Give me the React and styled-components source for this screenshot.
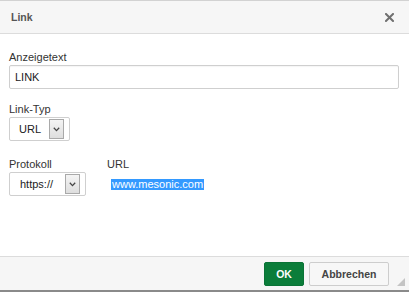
import React from "react";
import styled, { createGlobalStyle } from "styled-components";

const Global = createGlobalStyle`
  html, body { margin: 0; padding: 0; background: #fff; }
  body { font-family: "Liberation Sans", Arial, sans-serif; font-size: 11px; color: #333; }
  * { box-sizing: border-box; }
`;

const Dialog = styled.div`
  width: 409px;
  height: 292px;
  display: flex;
  flex-direction: column;
  border-top: 1px solid #d2d2d2;
  background: #fff;
`;

const Header = styled.div`
  height: 33px;
  flex: none;
  display: flex;
  align-items: center;
  justify-content: space-between;
  padding: 0 15px 0 11px;
  background: #f6f6f6;
  border-bottom: 1px solid #dcdcdc;
`;

const Title = styled.div`
  font-weight: bold;
  font-size: 10.5px;
  color: #555;
`;

const CloseIcon = styled.svg`
  display: block;
`;

const Body = styled.div`
  flex: 1;
  padding: 16px 10px 0 9px;
  display: flex;
  flex-direction: column;
`;

const Field = styled.div`
  display: flex;
  flex-direction: column;
  margin-top: ${(p) => p.$mt || 0}px;
`;

const Label = styled.div`
  height: 14px;
  line-height: 14px;
  margin-bottom: 1px;
  color: #333;
`;

const TextInput = styled.div`
  height: 24px;
  border: 1px solid #cfcfcf;
  border-radius: 2px;
  padding: 0 5px;
  display: flex;
  align-items: center;
  color: #222;
  box-shadow: inset 0 1px 1px rgba(0,0,0,0.04);
`;

const Select = styled.div`
  width: ${(p) => p.$w}px;
  height: 24px;
  border: 1px solid #cfcfcf;
  border-radius: 2px;
  display: flex;
  align-items: center;
  justify-content: space-between;
  padding: 0 5px 0 ${(p) => p.$pl}px;
  color: #222;
`;

const Arrow = styled.div`
  width: 15px;
  height: 20px;
  border: 1px solid #a9a9a9;
  background: linear-gradient(#f4f4f4, #dedede);
  display: flex;
  align-items: center;
  justify-content: center;
`;

const Row = styled.div`
  display: flex;
  margin-top: 16px;
`;

const Col = styled.div`
  display: flex;
  flex-direction: column;
  width: ${(p) => p.$w}px;
`;

const UrlValue = styled.div`
  height: 24px;
  display: flex;
  align-items: center;
  padding-left: 4px;
`;

const Selected = styled.span`
  background: #3399ff;
  color: #fff;
  line-height: 11px;
  padding: 0 1px;
`;

const Footer = styled.div`
  height: 36px;
  flex: none;
  background: #f6f6f6;
  border-top: 1px solid #dcdcdc;
  border-bottom: 2px solid #8a8a8a;
  display: flex;
  align-items: flex-start;
  justify-content: flex-end;
  padding: 5px 20px 0 0;
  gap: 5px;
  position: relative;
`;

const Button = styled.div`
  height: 24px;
  width: ${(p) => p.$w}px;
  display: flex;
  align-items: center;
  justify-content: center;
  font-weight: bold;
  font-size: 10.5px;
  border-radius: 2px;
  background: ${(p) => (p.$primary ? "#0b7d3a" : "#f7f7f7")};
  color: ${(p) => (p.$primary ? "#fff" : "#444")};
  border: 1px solid ${(p) => (p.$primary ? "#0a7336" : "#cdcdcd")};
`;

const Grip = styled.svg`
  position: absolute;
  right: 4px;
  bottom: 4px;
`;

const Chevron = () => (
  <svg width="7" height="5" viewBox="0 0 7 5">
    <path d="M0.8 0.8 L3.5 3.6 L6.2 0.8" fill="none" stroke="#444" strokeWidth="1.3" />
  </svg>
);

export default function App() {
  return (
    <>
      <Global />
      <Dialog>
        <Header>
          <Title>Link</Title>
          <CloseIcon width="9" height="9" viewBox="0 0 9 9" aria-label="Schließen">
            <path d="M1 1 L8 8 M8 1 L1 8" stroke="#707070" strokeWidth="2" strokeLinecap="square" />
          </CloseIcon>
        </Header>
        <Body>
          <Field>
            <Label>Anzeigetext</Label>
            <TextInput>LINK</TextInput>
          </Field>
          <Field $mt={13}>
            <Label>Link-Typ</Label>
            <Select $w={61} $pl={9}>
              <span>URL</span>
              <Arrow><Chevron /></Arrow>
            </Select>
          </Field>
          <Row>
            <Col $w={98}>
              <Label>Protokoll</Label>
              <Select $w={77} $pl={10}>
                <span>https://</span>
                <Arrow><Chevron /></Arrow>
              </Select>
            </Col>
            <Col $w={200}>
              <Label>URL</Label>
              <UrlValue>
                <Selected>www.mesonic.com</Selected>
              </UrlValue>
            </Col>
          </Row>
        </Body>
        <Footer>
          <Button $primary $w={40}>OK</Button>
          <Button $w={80}>Abbrechen</Button>
          <Grip width="8" height="8" viewBox="0 0 8 8">
            <path d="M8 0 L8 8 L0 8 Z" fill="#c4c4c4" />
          </Grip>
        </Footer>
      </Dialog>
    </>
  );
}
